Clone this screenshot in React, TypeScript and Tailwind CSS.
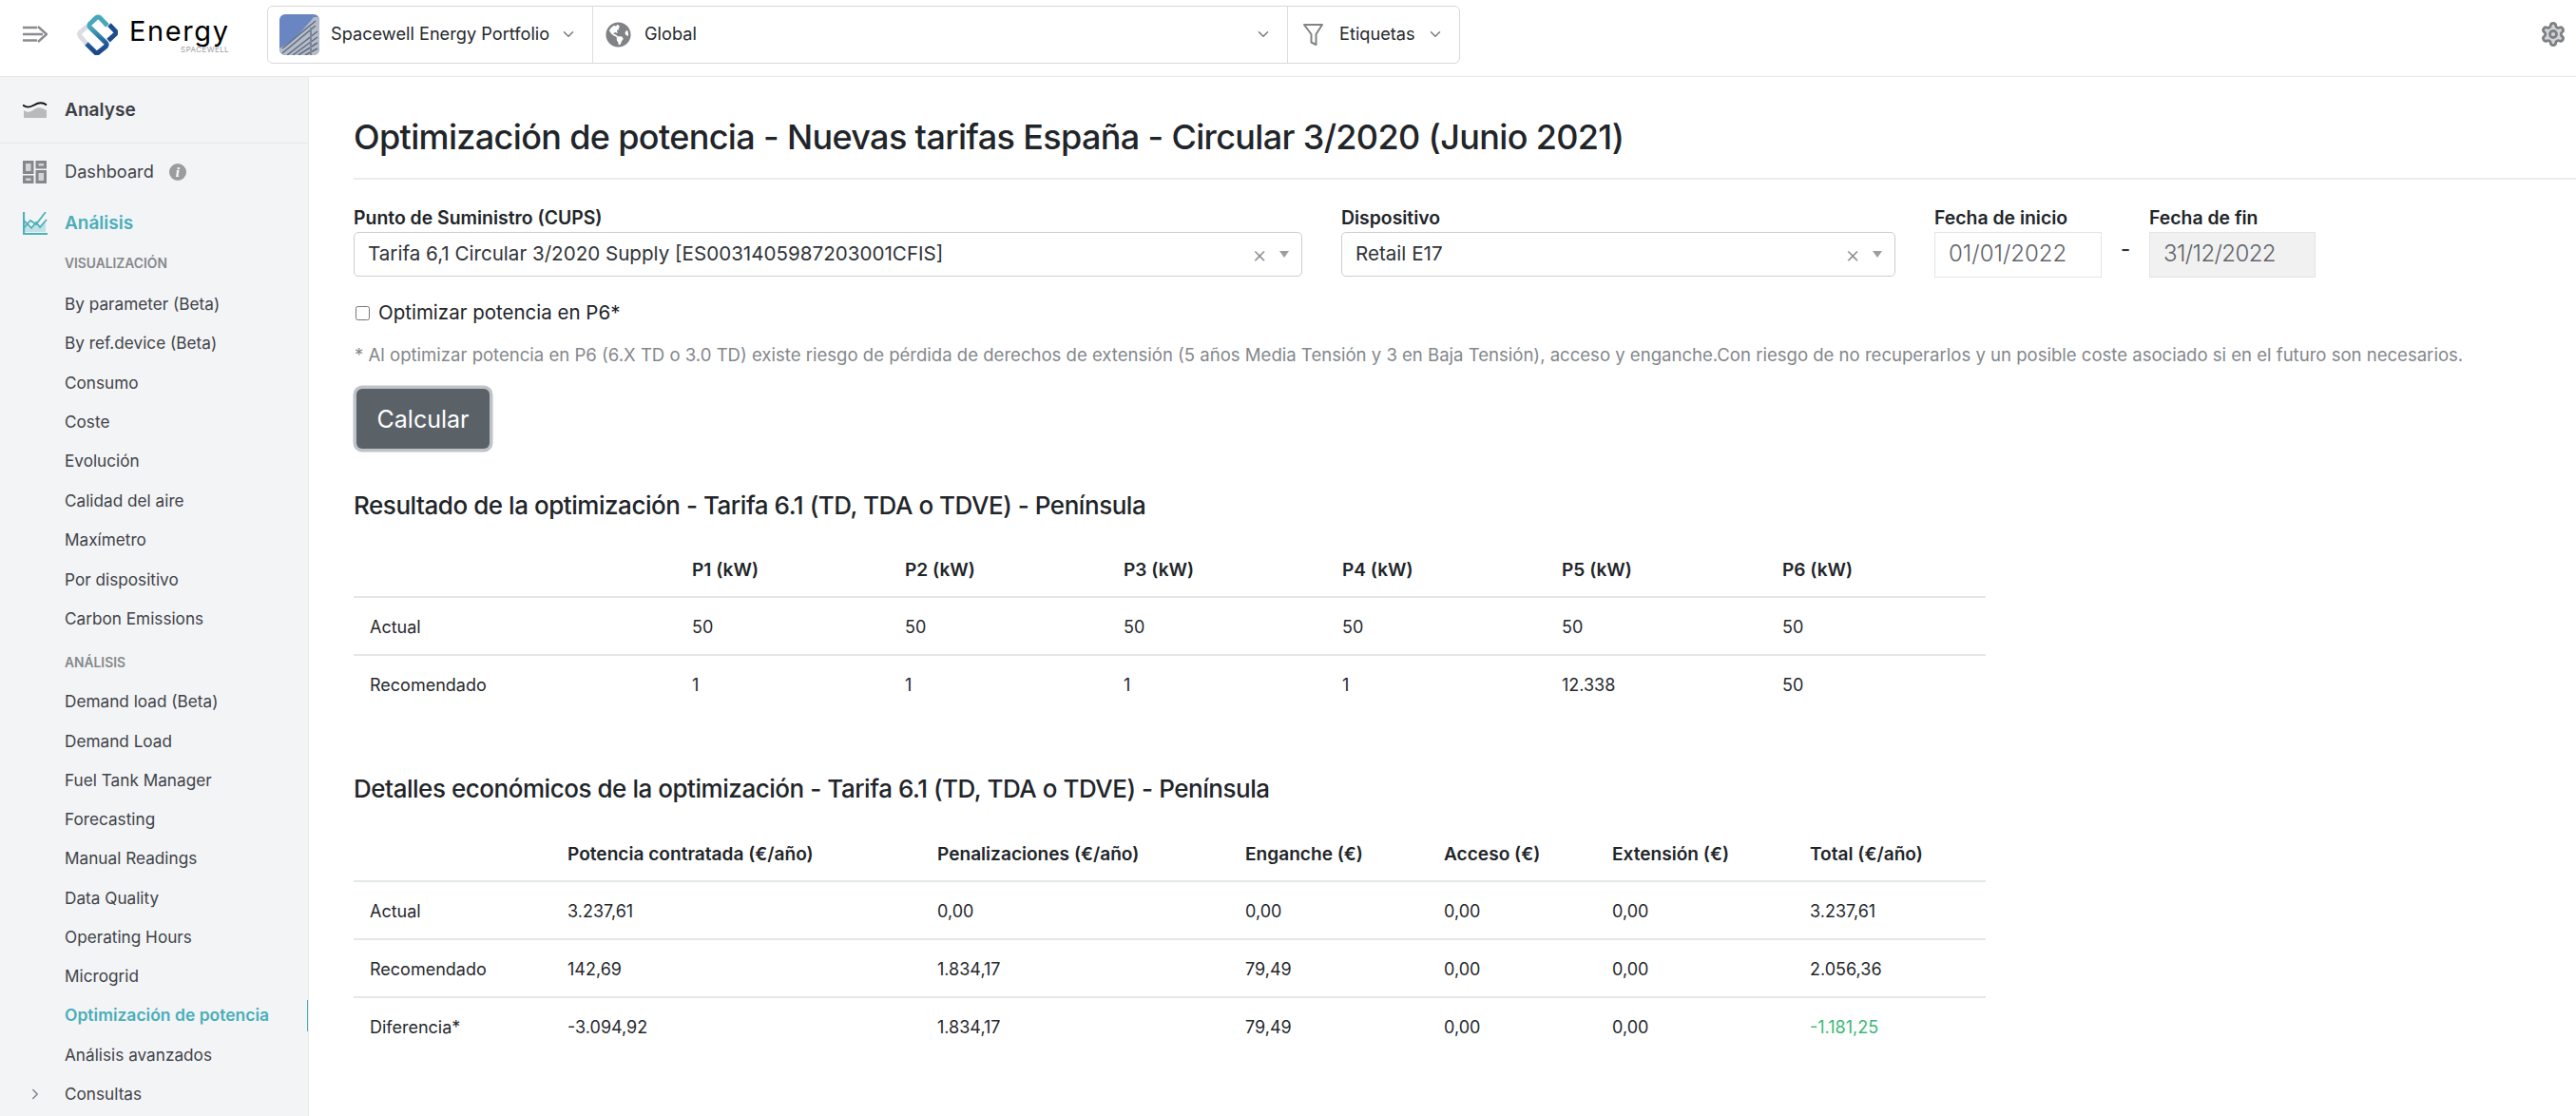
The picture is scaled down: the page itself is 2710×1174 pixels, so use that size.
import React from 'react';
import { ChevronDown, ChevronRight, Settings } from 'lucide-react';
import { FaGlobeAmericas } from 'react-icons/fa';

const VISUALIZACION = [
  'By parameter (Beta)',
  'By ref.device (Beta)',
  'Consumo',
  'Coste',
  'Evolución',
  'Calidad del aire',
  'Maxímetro',
  'Por dispositivo',
  'Carbon Emissions',
];

const ANALISIS = [
  'Demand load (Beta)',
  'Demand Load',
  'Fuel Tank Manager',
  'Forecasting',
  'Manual Readings',
  'Data Quality',
  'Operating Hours',
  'Microgrid',
];

const POWER_HEAD = ['', 'P1 (kW)', 'P2 (kW)', 'P3 (kW)', 'P4 (kW)', 'P5 (kW)', 'P6 (kW)'];
const POWER_ROWS = [
  ['Actual', '50', '50', '50', '50', '50', '50'],
  ['Recomendado', '1', '1', '1', '1', '12.338', '50'],
];

const COST_HEAD = ['', 'Potencia contratada (€/año)', 'Penalizaciones (€/año)', 'Enganche (€)', 'Acceso (€)', 'Extensión (€)', 'Total (€/año)'];
const COST_ROWS = [
  ['Actual', '3.237,61', '0,00', '0,00', '0,00', '0,00', '3.237,61'],
  ['Recomendado', '142,69', '1.834,17', '79,49', '0,00', '0,00', '2.056,36'],
  ['Diferencia*', '-3.094,92', '1.834,17', '79,49', '0,00', '0,00', '-1.181,25'],
];

function Logo() {
  return (
    <svg width="43" height="43" viewBox="0 0 43 43" fill="none" strokeWidth="5" strokeLinecap="butt" strokeLinejoin="round">
      <defs>
        <linearGradient id="logoMain" x1="20" y1="2" x2="22" y2="41" gradientUnits="userSpaceOnUse">
          <stop offset="0.3" stopColor="#47a9b8" />
          <stop offset="0.75" stopColor="#1f5a9a" />
          <stop offset="1" stopColor="#1c4788" />
        </linearGradient>
      </defs>
      <path d="M10.7 12.7 3.2 19.2a2.6 2.6 0 0 0 0 3.6L10 31" stroke="#dcdde3" />
      <path d="M33 27.7 40.2 21a2.4 2.4 0 0 0 0-3.4L34 11" stroke="#1d4d8f" />
      <path d="M32 12 24 3.6a2.6 2.6 0 0 0-3.6 0L13.6 10a2.6 2.6 0 0 0 0 3.7L30.4 30a2.6 2.6 0 0 1 0 3.7L22.6 40a2.6 2.6 0 0 1-3.4 0L10 31" stroke="url(#logoMain)" />
    </svg>
  );
}

function MenuIcon() {
  return (
    <svg width="26" height="18" viewBox="0 0 26 18" fill="none" stroke="#8a8c90" strokeWidth="2.4">
      <path d="M0 2h15M0 9h21M0 15.5h15M16 1l9 8-9 8" />
    </svg>
  );
}

function BuildingThumb() {
  return (
    <svg width="42" height="43" viewBox="0 0 42 43" className="rounded-[6px]">
      <rect width="42" height="43" fill="#6a86c2" />
      <path d="M0 43V36C16 27 28 13 36 3h6v40z" fill="#b4bcc9" />
      <path d="M3 41 38 12M3 36 38 7M8 43 40 18M14 43 40 24M20 43 40 30M27 43 40 36" stroke="#5f6b7e" strokeWidth="1.5" />
      <path d="M33 14v29" stroke="#7d8798" strokeWidth="2" />
    </svg>
  );
}

function FunnelIcon() {
  return (
    <svg width="21" height="23" viewBox="0 0 21 23" fill="none" stroke="#808387" strokeWidth="2" strokeLinejoin="round">
      <path d="M1 1h19l-6.5 10v11L8.5 19.5V11z" />
    </svg>
  );
}

function AnalyseIcon() {
  return (
    <svg width="26" height="17" viewBox="0 0 26 17">
      <path d="M1 9c4 3 7 2 11-1s8-2 13 1v8H1z" fill="#b9babc" />
      <path d="M0 3.5c4 3 7 3 12 0s9-3 13 0" fill="none" stroke="#111" strokeWidth="2" />
    </svg>
  );
}

function DashboardIcon() {
  return (
    <svg width="25" height="24" viewBox="0 0 25 24" fill="#d3d4d6" stroke="#85878b" strokeWidth="3">
      <rect x="1.5" y="1.5" width="8.5" height="11" />
      <rect x="15" y="1.5" width="8.5" height="5.5" />
      <rect x="1.5" y="17" width="8.5" height="5.5" />
      <rect x="15" y="11.5" width="8.5" height="11" />
    </svg>
  );
}

function InfoIcon() {
  return (
    <span className="flex h-[18px] w-[18px] items-center justify-center rounded-full bg-[#9c9c9c] [font-family:'Liberation_Serif',serif] text-[15px] font-bold italic leading-none text-white">
      i
    </span>
  );
}

function ChartIcon() {
  return (
    <svg width="26" height="24" viewBox="0 0 26 24" fill="none">
      <path d="M2 21v-8l6 5 5-6 4 4 7-7v12z" fill="#bfe1e5" />
      <path d="M1 0v23h25" stroke="#4db0ba" strokeWidth="2.2" />
      <path d="M1 9l8 8 5-6 4 5 7-8M1 17l7-8 6 4 10-13" stroke="#4db0ba" strokeWidth="1.8" />
    </svg>
  );
}

function NavLink({ label, active, tall }: { label: string; active?: boolean; tall?: boolean }) {
  return (
    <div
      className={`flex items-center pl-[68px] ${tall ? 'h-[41.4px]' : 'h-[41.3px]'} ${
        active ? 'relative text-[17.5px] font-semibold text-[#4aaeb9]' : 'text-[17.2px] text-[#3f4348]'
      }`}
    >
      {label}
      {active && <span className="absolute right-[-1px] top-[4px] h-[33px] w-[2px] bg-[#4aaeb9]" />}
    </div>
  );
}

function SectionLabel({ label }: { label: string }) {
  return (
    <div className="flex h-[31px] items-center pl-[68px] text-[13.8px] font-semibold uppercase text-[#86888c]">
      {label}
    </div>
  );
}

function Sidebar() {
  return (
    <aside className="h-[1094px] w-[325px] shrink-0 overflow-hidden border-r border-[#e9eaec] bg-[#f3f4f6]">
      <div className="flex h-[70px] items-center gap-[18px] border-b border-[#e7e8ea] pl-[24px]">
        <AnalyseIcon />
        <span className="text-[19.1px] font-semibold text-[#3c4045]">Analyse</span>
      </div>
      <div className="mt-[11px] flex h-[38px] items-center pl-[24px] text-[18.2px] text-[#3f4348]">
        <DashboardIcon />
        <span className="ml-[19px]">Dashboard</span>
        <span className="ml-[16px]"><InfoIcon /></span>
      </div>
      <div className="mt-[16px] flex h-[38px] items-center gap-[18px] pl-[24px] text-[19px] font-semibold text-[#4aaeb9]">
        <ChartIcon />
        Análisis
      </div>
      <div className="mt-[8px]">
        <SectionLabel label="Visualización" />
      </div>
      <div className="mt-[6px]">
        {VISUALIZACION.map((item) => (
          <NavLink key={item} label={item} tall />
        ))}
      </div>
      <div className="mt-[10px]">
        <SectionLabel label="Análisis" />
      </div>
      <div className="mt-[5px]">
        {ANALISIS.map((item) => (
          <NavLink key={item} label={item} />
        ))}
        <NavLink label="Optimización de potencia" active />
        <NavLink label="Análisis avanzados" />
        <div className="relative">
          <ChevronRight className="absolute left-[28px] top-[12px] h-[18px] w-[18px] text-[#808387]" />
          <NavLink label="Consultas" />
        </div>
      </div>
    </aside>
  );
}

function TopBar() {
  return (
    <header className="flex h-[81px] items-center border-b border-[#e6e7e9] bg-white pb-[8px] pl-[24px] pr-[10px]">
      <MenuIcon />
      <div className="ml-[31px] flex items-center">
        <Logo />
        <div className="ml-[12px] flex w-[105px] flex-col">
          <span className="text-[29px] leading-[31px] tracking-[1.6px] text-black">Energy</span>
          <span className="self-end text-[8px] leading-[8px] tracking-[0.4px] text-[#9b9da1]">SPACEWELL</span>
        </div>
      </div>
      <div className="ml-[40px] flex h-[61px] w-[1255px] items-center rounded-[6px] border border-[#d9dade] text-[18.2px] text-[#26292d]">
        <div className="flex h-full w-[342px] items-center border-r border-[#dcdde0] pl-[12px]">
          <BuildingThumb />
          <span className="ml-[12px]">Spacewell Energy Portfolio</span>
          <ChevronDown className="ml-[11px] h-[18px] w-[18px] text-[#76797d]" />
        </div>
        <div className="flex h-full w-[731px] items-center border-r border-[#dcdde0] pl-[13px]">
          <FaGlobeAmericas className="h-[27px] w-[27px] text-[#7f8286]" />
          <span className="ml-[14px]">Global</span>
          <ChevronDown className="ml-auto mr-[16px] h-[18px] w-[18px] text-[#76797d]" />
        </div>
        <div className="flex h-full flex-1 items-center pl-[16px]">
          <FunnelIcon />
          <span className="ml-[17px]">Etiquetas</span>
          <ChevronDown className="ml-[12px] h-[18px] w-[18px] text-[#76797d]" />
        </div>
      </div>
      <Settings className="ml-auto h-[28px] w-[28px] fill-[#d4d5d7] text-[#7d8084]" strokeWidth={2.4} />
    </header>
  );
}

function SelectBox({ value, width }: { value: string; width: string }) {
  return (
    <div className={`flex h-[47px] items-center rounded-[5px] border border-[#cbcdd0] pl-[14px] pr-[13px] text-[20.6px] text-[#303438] ${width}`}>
      <span>{value}</span>
      <span className="ml-auto text-[24px] font-light leading-none text-[#8c8f93]">×</span>
      <span className="ml-[13px] h-0 w-0 border-x-[5.5px] border-t-[7px] border-x-transparent border-t-[#9b9da0]" />
    </div>
  );
}

function Field({ label, children }: { label: string; children: React.ReactNode }) {
  return (
    <div>
      <div className="mb-[4px] h-[22px] whitespace-nowrap text-[19.4px] font-semibold leading-[22px] text-[#212529]">{label}</div>
      {children}
    </div>
  );
}

function DataTable({ head, rows, cols }: { head: string[]; rows: string[][]; cols: string[] }) {
  return (
    <table className="w-[1717px] table-fixed border-collapse text-[18px] text-[#26292d]">
      <colgroup>
        {cols.map((c, i) => (
          <col key={i} className={c} />
        ))}
      </colgroup>
      <thead>
        <tr className="h-[60px]">
          {head.map((h, i) => (
            <th key={i} className="px-[17px] pt-[3px] text-left text-[19.1px] font-semibold text-[#212529]">
              {h}
            </th>
          ))}
        </tr>
      </thead>
      <tbody>
        {rows.map((row) => (
          <tr key={row[0]} className="h-[61px] border-t-2 border-[#e4e7ea]">
            {row.map((cell, i) => (
              <td key={i} className={`px-[17px] pt-[1px] ${cell === '-1.181,25' ? 'text-[#3cb878]' : ''}`}>
                {cell}
              </td>
            ))}
          </tr>
        ))}
      </tbody>
    </table>
  );
}

export default function App() {
  return (
    <div className="h-[1174px] w-full overflow-hidden bg-white [font-family:Inter,sans-serif]">
      <TopBar />
      <div className="flex">
        <Sidebar />
        <main className="min-w-0 flex-1 pl-[47px]">
          <div className="flex h-[108px] items-start border-b-2 border-[#e9ebee] pt-[42px]">
            <h1 className="text-[36px] font-medium leading-[42px] tracking-[-0.65px] text-[#212529]">
              Optimización de potencia - Nuevas tarifas España - Circular 3/2020 (Junio 2021)
            </h1>
          </div>

          <div className="mt-[29px] flex items-start">
            <Field label="Punto de Suministro (CUPS)">
              <SelectBox value="Tarifa 6,1 Circular 3/2020 Supply [ES0031405987203001CFIS]" width="w-[998px]" />
            </Field>
            <div className="ml-[41px]">
              <Field label="Dispositivo">
                <SelectBox value="Retail E17" width="w-[583px]" />
              </Field>
            </div>
            <div className="ml-[41px]">
              <Field label="Fecha de inicio">
                <div className="flex h-[48px] w-[176px] items-center border border-[#e2e4e6] pb-[2px] pl-[14px] text-[24px] font-light text-[#5f6368]">
                  01/01/2022
                </div>
              </Field>
            </div>
            <div className="mt-[28px] w-[50px] text-center text-[22px] font-medium text-[#303438]">-</div>
            <Field label="Fecha de fin">
              <div className="flex h-[48px] w-[175px] items-center border border-[#e2e4e6] bg-[#f1f1f1] pb-[2px] pl-[14px] text-[24px] font-light tracking-[-0.6px] text-[#5f6368]">
                31/12/2022
              </div>
            </Field>
          </div>

          <label className="mt-[23px] flex h-[28px] items-center text-[20.5px] text-[#212529]">
            <input type="checkbox" className="ml-[2px] h-[15px] w-[15px]" />
            <span className="ml-[9px]">Optimizar potencia en P6*</span>
          </label>

          <p className="mt-[16px] h-[28px] whitespace-nowrap pl-[1px] text-[18.56px] leading-[28px] text-[#84888c]">
            * Al optimizar potencia en P6 (6.X TD o 3.0 TD) existe riesgo de pérdida de derechos de extensión (5 años Media Tensión y 3 en Baja Tensión), acceso y enganche.Con riesgo de no recuperarlos y un posible coste asociado si en el futuro son necesarios.
          </p>

          <button className="ml-[3px] mt-[22px] block h-[63px] w-[140px] rounded-[6px] bg-[#5a6268] pt-[2px] text-[25px] text-white shadow-[0_0_0_3.5px_#bfc3c7]">
            Calcular
          </button>

          <h2 className="mt-[40px] h-[40px] text-[26px] font-medium leading-[40px] tracking-[-0.46px] text-[#212529]">
            Resultado de la optimización - Tarifa 6.1 (TD, TDA o TDVE) - Península
          </h2>
          <div className="mt-[16px]">
            <DataTable
              head={POWER_HEAD}
              rows={POWER_ROWS}
              cols={['w-[339px]', 'w-[224px]', 'w-[230px]', 'w-[230px]', 'w-[231px]', 'w-[232px]', 'w-[231px]']}
            />
          </div>

          <h2 className="mt-[60px] h-[40px] text-[26px] font-medium leading-[40px] tracking-[-0.46px] text-[#212529]">
            Detalles económicos de la optimización - Tarifa 6.1 (TD, TDA o TDVE) - Península
          </h2>
          <div className="mt-[17px]">
            <DataTable
              head={COST_HEAD}
              rows={COST_ROWS}
              cols={['w-[208px]', 'w-[389px]', 'w-[324px]', 'w-[209px]', 'w-[177px]', 'w-[208px]', 'w-[202px]']}
            />
          </div>
        </main>
      </div>
    </div>
  );
}
